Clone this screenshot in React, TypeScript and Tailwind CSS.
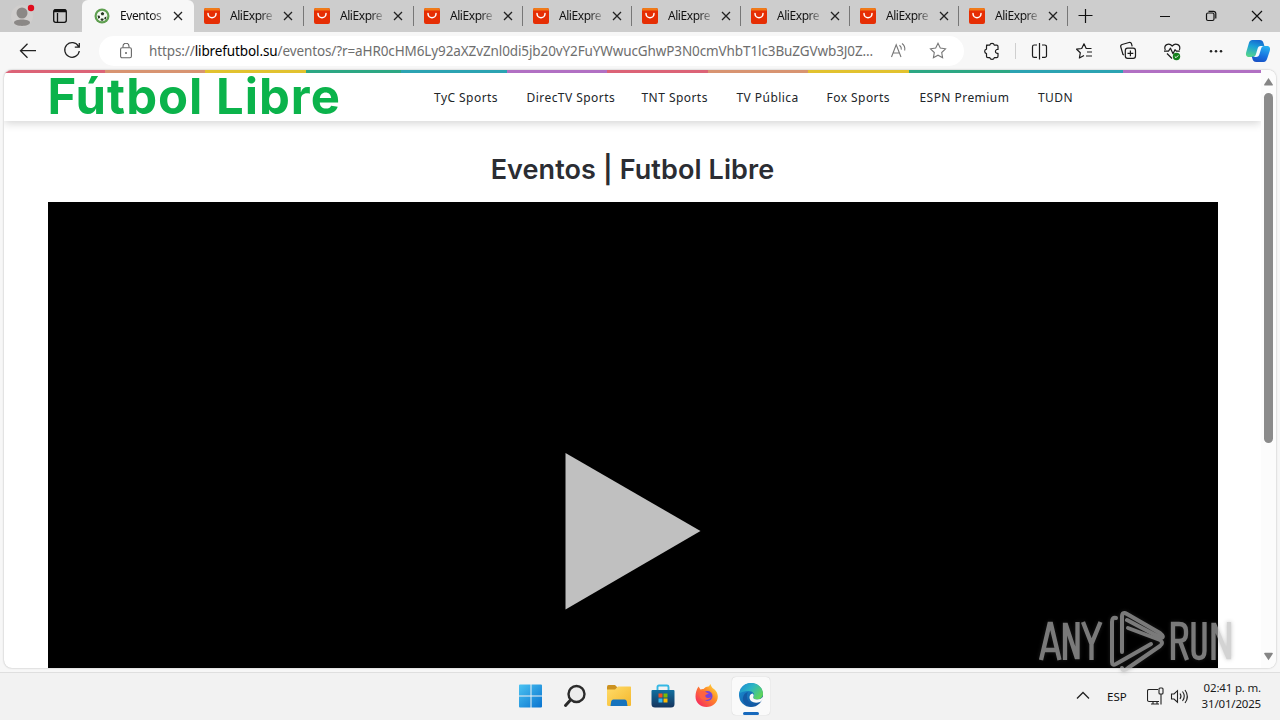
import type { ReactNode } from 'react';

const SEGOE = "font-['Noto_Sans','Open_Sans',sans-serif]";

function Close() {
  return (
    <svg width="10" height="10" viewBox="0 0 10 10" stroke="#222" strokeWidth="1.3" className="shrink-0">
      <path d="M1 1l8 8M9 1l-8 8" />
    </svg>
  );
}

function AliIcon() {
  return (
    <svg width="16" height="16" viewBox="0 0 16 16" className="shrink-0">
      <rect width="16" height="16" rx="2" fill="#e62e04" />
      <path d="M2 0h12a2 2 0 0 1 2 2v1.500H0V2a2 2 0 0 1 2-2z" fill="#f07a18" />
      <path d="M0 2.500h16v4H0z" fill="#e62e04" />
      <path d="M4 5.500a4 4.300 0 0 0 8 0" fill="none" stroke="#fff" strokeWidth="1.500" strokeLinecap="round" />
    </svg>
  );
}

function BallIcon() {
  return (
    <svg width="16" height="16" viewBox="0 0 16 16" className="shrink-0">
      <circle cx="8" cy="8" r="7.500" fill="#5f9f50" />
      <circle cx="8" cy="8" r="5.300" fill="#f4f8f2" />
      <path d="M8.500 4l1.700 1.200-.7 2H7.500L6.700 5.200zM3.500 7.500l2.200.3.400 2-1.800 1zM12.500 8.500l-1.800.7-.5 1.900 1.600.4zM7 10.500h2.200l.6 1.500-1.700 1-1.700-1z" fill="#253622" />
    </svg>
  );
}

const aliTabs = ['w-[110px]', 'w-[110px]', 'w-[109px]', 'w-[109px]', 'w-[109px]', 'w-[109px]', 'w-[109px]', 'w-[109px]'];

function TabStrip() {
  return (
    <div className="flex h-8 shrink-0 bg-[#cdcdcd]">
      <div className="flex w-[82px] items-center rounded-br-md bg-[#cacaca]">
        <svg width="82" height="32" viewBox="0 0 82 32">
          <circle cx="22" cy="16" r="11" fill="#d0cecd" />
          <circle cx="22" cy="13" r="5.500" fill="#8b8886" />
          <path d="M14 22.500c0-4 16-4 16 0 0 4.500-16 4.500-16 0z" fill="#8b8886" />
          <circle cx="31" cy="8" r="3.200" fill="#e00b1c" />
          <g fill="none" stroke="#111" strokeWidth="1.300">
            <rect x="53.700" y="9.700" width="12.600" height="12.600" rx="2" />
            <path d="M54 11.500h12M57.500 13v9" />
            <path d="M54 10.500h12" strokeWidth="2" />
          </g>
        </svg>
      </div>
      <div className="flex w-[112px] items-center rounded-t-md bg-[#f7f7f7] pl-3">
        <BallIcon />
        <span className="ml-2.5 w-[44px] bg-linear-to-r from-[#111] from-70% to-[#aaa] bg-clip-text text-[12px] tracking-[-0.420px] whitespace-nowrap text-transparent">Eventos</span>
        <span className="ml-[9px]"><Close /></span>
      </div>
      {aliTabs.map((w, i) => (
        <div key={i} className={`flex shrink-0 items-center ${w}`}>
          <span className="ml-2.5 flex"><AliIcon /></span>
          <span className="ml-2.5 w-[45px] bg-linear-to-r from-[#111] from-65% to-[#bbb] bg-clip-text text-[12px] tracking-[-0.450px] whitespace-nowrap text-transparent">AliExpre</span>
          <span className="ml-[8px] flex-1"><Close /></span>
          <span className="h-5 w-px bg-[#777]" />
        </div>
      ))}
      <svg width="212" height="32" viewBox="1068 0 212 32" fill="none" stroke="#111" strokeWidth="1.200">
        <path d="M1078.500 15.500h14M1085.500 9v14M1160 16.500h10M1252 11l10 10M1262 11l-10 10" />
        <rect x="1206.500" y="13" width="7.500" height="7.500" rx="1.500" />
        <path d="M1208.500 11.300h5a2.300 2.300 0 0 1 2.300 2.300v5" />
      </svg>
    </div>
  );
}

function Toolbar() {
  return (
    <div className="flex h-[38px] shrink-0 items-center bg-[#f7f7f7]">
      <svg width="99" height="38" viewBox="0 32 99 38" fill="none" stroke="#222" strokeWidth="1.300">
        <path d="M36 50.700H20.700M27.500 43.700l-7 7 7 7" />
        <path d="M78.500 46.500a7.300 7.300 0 1 0 .8 4.500M79.300 43v4.200h-4.500" />
      </svg>
      <div className="flex h-[30px] w-[865px] shrink-0 items-center rounded-full bg-white pl-[21px]">
        <svg width="12" height="16" viewBox="0 0 12 16" fill="none" stroke="#666" strokeWidth="1.100">
          <rect x=".6" y="4.800" width="10.800" height="10" rx="1.500" />
          <path d="M3 4.500V3.300a3 3 0 0 1 6 0v1.200" />
          <circle cx="6" cy="10" r="1" fill="#666" stroke="none" />
        </svg>
        <span className="ml-[17px] w-[728px] text-[13.500px] tracking-[-0.110px] whitespace-nowrap text-[#6e6e6e]">
          https://<span className="text-black">librefutbol.su</span>/eventos/?r=aHR0cHM6Ly92aXZvZnl0di5jb20vY2FuYWwucGhwP3N0cmVhbT1lc3BuZGVwb3J0Z...
        </span>
        <svg width="86" height="30" viewBox="877 36 86 30" fill="none" stroke="#777" strokeWidth="1.100">
          <path d="M891.500 57l4.700-12.200L901 57M893.100 53h6.300M899.500 45.200q2.200 1.700 1.800 4.500M902 43.500q3.500 2.700 2.700 7" />
          <path d="M938 43.200l2.300 4.900 5.200.7-3.800 3.700.9 5.300-4.600-2.600-4.600 2.600.9-5.300-3.800-3.700 5.200-.7z" />
        </svg>
      </div>
      <svg width="316" height="38" viewBox="964 32 316 38" fill="none" stroke="#1c1c1c" strokeWidth="1.200" strokeLinejoin="round">
        <defs>
          <linearGradient id="cpA" x1=".6" y1="0" x2=".3" y2="1"><stop stopColor="#1668d0" /><stop offset=".4" stopColor="#1ba0d8" /><stop offset="1" stopColor="#55d58c" /></linearGradient>
          <linearGradient id="cpB" x1=".6" y1="0" x2=".3" y2="1"><stop stopColor="#27aef0" /><stop offset=".6" stopColor="#1670df" /><stop offset="1" stopColor="#1950c4" /></linearGradient>
        </defs>
        <path d="M986.500 45.200h3.300a2.300 2.300 0 0 1 4.500 0h2.400a1.300 1.300 0 0 1 1.300 1.300v3h-1.200a2 2 0 0 0 0 3.800h1.200v3a1.300 1.300 0 0 1-1.300 1.300h-2.400a2.300 2.300 0 0 1-4.500 0h-2a1.300 1.300 0 0 1-1.300-1.300v-2.700a2.300 2.300 0 0 1 0-4.500v-2.600a1.300 1.300 0 0 1 1.300-1.300z" />
        <path d="M1015.500 43v16" stroke="#cfcfcf" strokeWidth="1" />
        <path d="M1037 45h-2.800a1.700 1.700 0 0 0-1.700 1.700v9a1.700 1.700 0 0 0 1.700 1.700h2.800M1042 45h2.800a1.700 1.700 0 0 1 1.700 1.700v9a1.700 1.700 0 0 1-1.700 1.700h-2.800M1039.500 43v16.500" />
        <path d="M1091.500 48.500h-5.300l-2.200-4.700-2.300 4.700-5.100.7 3.700 3.600-.9 5.200 4.600-2.500M1087 52h5M1086 56h6" />
        <rect x="1125.300" y="48.200" width="10.200" height="10.200" rx="2.300" />
        <path d="M1130.400 50.500v5.800M1127.500 53.400h5.800M1124 55l-1-.5-2.200-7.500a2 2 0 0 1 1.300-2.500l6.900-2a2 2 0 0 1 2.500 1.300l.7 2.500" />
        <path d="M1165.300 50c-2-5 3.500-8 6.900-4 3.600-4 9-1 7.200 4M1167 53.500l5 5M1164 51.200h4.500l2-3 2.500 5.500 2-4 1.300 1.500h3.500" />
        <circle cx="1176.500" cy="56.500" r="3.700" fill="#13801b" stroke="none" />
        <path d="M1174.800 56.500l1.200 1.200 2.300-2.300" stroke="#fff" strokeWidth="1" />
        <g fill="#222" stroke="none"><circle cx="1211" cy="51.200" r="1.250" /><circle cx="1216" cy="51.200" r="1.250" /><circle cx="1221" cy="51.200" r="1.250" /></g>
        <g stroke="none">
          <path d="M1252.500 40h7c2.800 0 3.600 1.400 4.300 4l.9 3h-3c-2.200 0-3 .9-3.500 2.700l-1.300 4.400c-.6 2-1.500 2.900-3.500 2.900h-4c-3 0-4-2-3.200-4.800l2.500-8.500c.7-2.400 1.600-3.700 3.800-3.700z" fill="url(#cpA)" />
          <path d="M1263.500 62h-7c-2.800 0-3.600-1.400-4.300-4l-.4-1.500h2.500c2.200 0 3-.9 3.500-2.700l1.300-4.400c.6-2 1.500-3.400 3.500-3.400h4c3 0 4 2 3.200 4.800l-2.500 7.500c-.7 2.400-1.600 3.700-3.800 3.700z" fill="url(#cpB)" />
          <path d="M1260.800 46h3.200c-1.800.3-2.500 1.300-3 3l-1.500 5c-.5 1.800-1.500 3-3.500 3h-3c1.800-.3 2.500-1.300 3-3l1.500-5c.5-1.800 1.300-3 3.300-3z" fill="#f5f9ff" />
        </g>
      </svg>
    </div>
  );
}

const stripes = [
  'w-[101px] bg-[#dc6377]', 'w-[100px] bg-[#d89471]', 'w-[101px] bg-[#e2c22e]', 'w-[95px] bg-[#2ca783]', 'w-[106px] bg-[#2ba3b2]', 'w-[100px] bg-[#b170c3]',
  'w-[101px] bg-[#dc6377]', 'w-[100px] bg-[#d89471]', 'w-[101px] bg-[#e2c22e]', 'w-[101px] bg-[#2ca783]', 'w-[113px] bg-[#2ba3b2]', 'flex-1 bg-[#b170c3]',
];

const links: [string, string][] = [
  ['TyC Sports', 'w-[92.500px]'], ['DirecTV Sports', 'w-[115px]'], ['TNT Sports', 'w-[95px]'], ['TV Pública', 'w-[90px]'],
  ['Fox Sports', 'w-[93px]'], ['ESPN Premium', 'w-[118.500px]'], ['TUDN', 'w-[60px]'],
];

function Page() {
  return (
    <div className="mx-1 flex h-[598px] shrink-0 overflow-hidden rounded-lg bg-white shadow-[0_0_2px_rgba(0,0,0,0.3)]">
      <main className="flex w-[1257px] flex-col">
        <header className="h-[51px] shrink-0 shadow-[0_2px_9px_rgba(0,0,0,0.18)]">
          <div className="flex h-[3px]">{stripes.map((s, i) => <span key={i} className={s} />)}</div>
          <div className="flex h-12 items-center">
            <div className="w-[430px] pl-[43.500px] font-['Inter',sans-serif] text-[49px] leading-[48px] font-bold tracking-[1px] whitespace-nowrap text-[#0bb34b]">Fútbol Libre</div>
            <nav className="flex pt-px text-[12px] tracking-[0.450px] text-[#212529]">
              {links.map(([t, w]) => <a key={t} className={`shrink-0 whitespace-nowrap ${w}`}>{t}</a>)}
            </nav>
          </div>
        </header>
        <h1 className="flex h-[81px] shrink-0 items-center justify-center pt-[18px] font-['Inter',sans-serif] text-[27px] font-semibold tracking-[0.100px] text-[#2b2d33]">Eventos | Futbol Libre</h1>
        <div className="mx-11 h-[466px] w-[1170px] bg-black">
          <svg width="1170" height="466" viewBox="48 202 1170 466"><path d="M565.500 453v156.500L700.500 531z" fill="#c0c0c0" /></svg>
        </div>
      </main>
      <div className="flex w-[15px] flex-col items-center bg-[#fcfcfc]">
        <svg width="15" height="23" viewBox="0 0 15 23"><path d="M7.500 8l4.300 6.500q.3 1-.8 1H4q-1.100 0-.8-1z" fill="#858585" /></svg>
        <div className="h-[350px] w-[9px] rounded-full bg-[#8b8b8b]" />
        <span className="flex-1" />
        <svg width="15" height="20" viewBox="0 0 15 20"><path d="M7.500 12.300L3.200 5.800q-.3-1 .8-1h7q1.100 0 .8 1z" fill="#858585" /></svg>
      </div>
    </div>
  );
}

function Watermark() {
  return (
    <div className="absolute top-[606px] left-[1034px] flex h-[68px] w-[204px] items-center opacity-65 drop-shadow-[0_0_2px_rgba(90,90,90,0.5)]">
      <svg width="204" height="68" viewBox="1034 606 204 68" fill="none" stroke="#bcbcbc" strokeWidth="4.300">
        <path d="M1041 660l8.500-36h1.500l8.500 36M1044 650h12M1065 660v-35h1l10.500 32h1v-35M1083 622l8.500 22v16M1091.500 644l9-22" />
        <path d="M1173 660v-36h6q7 0 7 7v3q0 7-7 7h-6M1180 641l7 19M1193.500 622v29q0 7 5.500 7t5.500-7v-29M1213.500 660v-35h1l13.500 32h1v-35" />
        <g strokeLinejoin="round" strokeLinecap="round" strokeWidth="4">
          <path d="M1122 652v-35q0-6 5-3l33 19q5 4 1 5l-34-18" />
          <path d="M1116 618q-4-1-4 4v40q0 4 4 2l35-20" />
          <path d="M1128 628l32 12q4 3 0 6l-32 22q-5 4-6 0" />
        </g>
      </svg>
    </div>
  );
}

function TaskIcon({ children }: { children: ReactNode }) {
  return <svg width="24" height="24" viewBox="0 0 24 24" className="shrink-0">{children}</svg>;
}

function Taskbar() {
  return (
    <div className="mt-1 flex h-12 shrink-0 items-center border-t border-[#dfdfdf] bg-[#f2f2f2] pb-0.5 pl-[519px]">
      <svg width="0" height="0" className="absolute">
        <defs>
          <linearGradient id="win" gradientUnits="userSpaceOnUse" x1="0" y1="0" x2="23" y2="24"><stop stopColor="#4cc4f2" /><stop offset="1" stopColor="#0872cf" /></linearGradient>
          <linearGradient id="fold" x2="1" y2="1"><stop stopColor="#ffdc69" /><stop offset="1" stopColor="#f4b72d" /></linearGradient>
          <linearGradient id="store" x2="0" y2="1"><stop stopColor="#126f9f" /><stop offset="1" stopColor="#15355e" /></linearGradient>
          <linearGradient id="fox" x1="1" x2="0" y2="1"><stop stopColor="#fff044" /><stop offset=".4" stopColor="#ff8a27" /><stop offset="1" stopColor="#f5176a" /></linearGradient>
          <linearGradient id="edgeTop" x2="1" y2=".6"><stop stopColor="#1a86d6" /><stop offset=".5" stopColor="#2bb5c4" /><stop offset="1" stopColor="#5fd45c" /></linearGradient>
          <linearGradient id="edgeBot" x2="1" y2="1"><stop stopColor="#1a94d8" /><stop offset="1" stopColor="#124a94" /></linearGradient>
        </defs>
      </svg>
      <div className="flex items-center gap-5">
        <TaskIcon><path d="M1 .5h10.500v11H0v-10q0-1 1-1zM12.500.5H22q1 0 1 1v10H12.500zM0 12.500h11.500v11H1q-1 0-1-1zM12.500 12.500H23v10q0 1-1 1h-9.500z" fill="url(#win)" /></TaskIcon>
        <TaskIcon><circle cx="13.500" cy="10" r="8" fill="#ececec" stroke="#2b2b2b" strokeWidth="2.400" /><path d="M7.500 16L2.500 21.500" stroke="#2b2b2b" strokeWidth="3" strokeLinecap="round" /></TaskIcon>
        <TaskIcon>
          <path d="M0 3q0-2 1.500-2H8l2.500 2.500L9 6H0z" fill="#cc9220" />
          <path d="M0 5.500h8l3-3h12q1.300 0 1.300 1.300V20.500q0 1.500-1.500 1.500h-21Q0 22 0 20.500z" fill="url(#fold)" />
          <path d="M3.500 22l.7-4.500q.4-2 2.200-2h11.200q1.800 0 2.200 2l.7 4.500z" fill="#1673bd" />
        </TaskIcon>
        <TaskIcon>
          <path d="M6.500 7V3q0-1.500 1.500-1.500h8Q17.500 1.500 17.500 3v4" fill="none" stroke="#35b8e4" strokeWidth="1.900" />
          <path d="M1.500 6h21q1 0 1 1v13q0 3.500-3.500 3.500H4Q.5 23.500.5 20V7q0-1 1-1z" fill="url(#store)" />
          <path d="M7.500 9.500h4v4h-4z" fill="#f25022" /><path d="M12.500 9.500h4v4h-4z" fill="#7fba00" /><path d="M7.500 14.500h4v4h-4z" fill="#35b8f1" /><path d="M12.500 14.500h4v4h-4z" fill="#ffb900" />
        </TaskIcon>
        <TaskIcon>
          <path d="M3.500 2.500l2 3q1.500-.8 3-.5 2-2.500 4-2.500 1 1 3-2.500.5 2.500 2 4c3 2 5.300 4.500 5.300 8.500 0 6-5 10.500-11.300 10.500S.5 18.500.5 12.500C.5 9 1.500 5 3.500 2.500z" fill="url(#fox)" />
          <circle cx="12.500" cy="12" r="5" fill="#7443dd" /><path d="M4.500 8c2.500-1.500 5-1 7 .5l2.500 1-3.500 1.500c-1 3 3 4 5.500 2-1 4-10.500 4.500-11.500-1z" fill="#ff6340" />
        </TaskIcon>
      </div>
      <div className="ml-[13px] flex h-[38px] w-[38px] flex-col items-center rounded bg-[#fafafa] pt-[6px] shadow-[0_0_1px_rgba(0,0,0,0.25)]">
        <TaskIcon>
          <circle cx="12" cy="12" r="12" fill="url(#edgeBot)" />
          <path d="M.3 10.500C1.500 4 6 0 12 0c7 0 12 5 12 10.500 0 4-3 6-6.500 6-3 0-4-1.300-3-2.500 2-3-1-6-5-6-4 0-7.500 1-9.200 2.500z" fill="url(#edgeTop)" />
          <path d="M9 9c-3 5 0 13 9 12.500-8 5-15-1-14-7 .5-3 2.500-5 5-5.500z" fill="#135aa5" />
          <path d="M13.500 10.500c1.800 1.500 1.100 2.700.8 3.500-.5 1.300 1 2.500 3.700 2.500 2.700 0 4.500-1 6.500-3-.4 3-1.800 4.800-3.500 5.500-5.500 2-10.500-.5-10.500-4.500 0-2.200 1.200-3.700 3-4z" fill="#fafafa" />
        </TaskIcon>
        <span className="mt-[5px] h-[3px] w-4 shrink-0 rounded-full bg-[#1769bd]" />
      </div>
      <svg width="24" height="24" viewBox="0 0 24 24" className="ml-[301px]" fill="none" stroke="#222" strokeWidth="1.300"><path d="M6 14.500l6-6 6 6" /></svg>
      <span className="ml-3 w-10 pt-0.5 text-[11.500px] text-[#111]">ESP</span>
      <svg width="44" height="24" viewBox="1147 684 44 24" fill="none" stroke="#222" strokeWidth="1.100">
        <path d="M1158 689.500h-9q-1.500 0-1.500 1.500v9q0 1.500 1.500 1.500h10M1151 704h8M1153 701.500v2.500M1157 701.500v2.500M1161 694v10.500" />
        <rect x="1159" y="688" width="4" height="6" rx="1" />
        <path d="M1171.500 694h2.500l3.500-3.300v11.500L1174 699h-2.500zM1180 693.500q2 2.700 0 5.500M1182.500 691.500q3.600 4.800 0 9.500M1185 690q4.700 6.500 0 13" />
      </svg>
      <div className="ml-auto w-[72px] pr-[19px] text-right text-[11.500px] leading-4 tracking-[-0.180px] text-[#1a1a1a]">
        <div className="flex justify-end whitespace-nowrap">02:41 p. m.</div>
        <div className="flex justify-end whitespace-nowrap">31/01/2025</div>
      </div>
    </div>
  );
}

export default function App() {
  return (
    <div className={`relative flex h-[720px] w-[1280px] flex-col overflow-hidden bg-[#f7f7f7] ${SEGOE}`}>
      <TabStrip />
      <Toolbar />
      <Page />
      <Taskbar />
      <Watermark />
    </div>
  );
}
